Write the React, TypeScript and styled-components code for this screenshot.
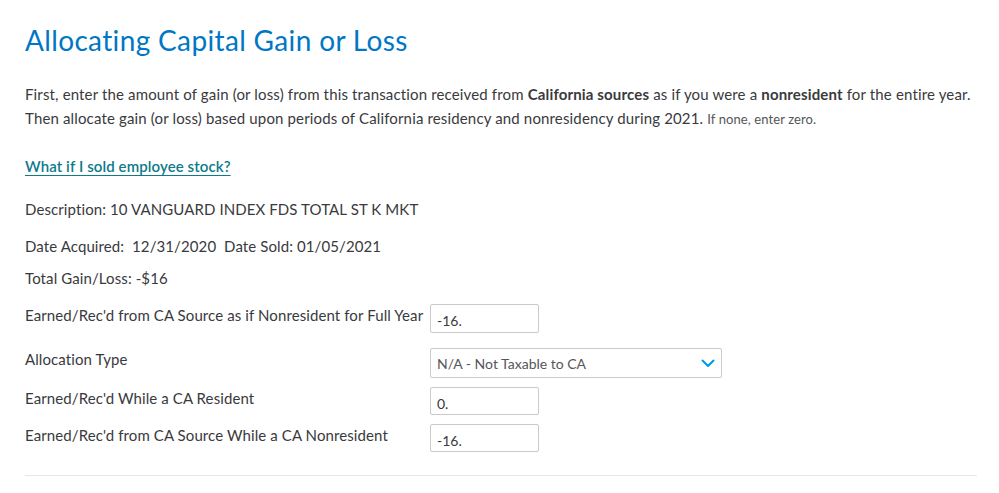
import styled, {createGlobalStyle} from "styled-components"

const GlobalStyle = createGlobalStyle`
  body {
    margin: 0;
    background: #ffffff;
    font-family: Lato, "Noto Sans", "Liberation Sans", sans-serif;
    color: #393a3d;
  }
`

const Page = styled.div`
  padding: 23px 22px 16px 25px;
  width: 952px;
`

const Title = styled.h1`
  margin: 0;
  font-size: 28px;
  line-height: 34px;
  font-weight: 400;
  letter-spacing: 0.35px;
  color: #0077c5;
`

const Intro = styled.p`
  margin: 25px 0 0;
  font-size: 15px;
  line-height: 24px;
  letter-spacing: 0.15px;
`

const Hint = styled.span`
  font-size: 13px;
  letter-spacing: 0.1px;
  color: #55565a;
`

const HelpLink = styled.a`
  display: inline-block;
  margin-top: 23px;
  font-size: 15px;
  line-height: 24px;
  font-weight: 600;
  letter-spacing: 0.1px;
  color: #0d7b8a;
  text-decoration: underline;
  text-underline-offset: 3px;
`

const Detail = styled.div<{gap: number}>`
  margin-top: ${({gap}) => gap}px;
  font-size: 15px;
  line-height: 24px;
  letter-spacing: 0.1px;
  white-space: pre;
`

const Form = styled.div`
  margin-top: 14px;
  display: flex;
  flex-direction: column;
`

const Row = styled.div<{gap: number}>`
  display: grid;
  grid-template-columns: 405px 1fr;
  align-items: start;
  margin-top: ${({gap}) => gap}px;
`

const Label = styled.div`
  font-size: 15px;
  line-height: 22px;
  letter-spacing: 0.1px;
`

const Field = styled.input<{tall: number}>`
  box-sizing: border-box;
  width: 109px;
  height: ${({tall}) => tall}px;
  margin: 0;
  padding: 4px 6px 0;
  border: 1px solid #c9cacc;
  border-radius: 2px;
  font-family: inherit;
  font-size: 14px;
  color: #393a3d;
  background: #ffffff;
  outline: none;
`

const SelectBox = styled.div`
  box-sizing: border-box;
  width: 292px;
  height: 30px;
  padding: 0 6px 0 6px;
  border: 1px solid #c9cacc;
  border-radius: 2px;
  display: flex;
  align-items: center;
  justify-content: space-between;
  font-size: 14px;
  color: #55565a;
`

const Divider = styled.hr`
  margin: 23px 0 0;
  border: none;
  border-top: 1px solid #e6e7e8;
`

function Chevron() {
  return (
    <svg width="14" height="9" viewBox="0 0 14 9" fill="none">
      <path d="M1.5 1.5 L7 7 L12.5 1.5" stroke="#0097e6" strokeWidth="2" strokeLinecap="round" strokeLinejoin="round" />
    </svg>
  )
}

export default function App() {
  return (
    <Page>
      <GlobalStyle />
      <Title>Allocating Capital Gain or Loss</Title>
      <Intro>
        First, enter the amount of gain (or loss) from this transaction received from <b>California sources</b> as if
        you were a <b>nonresident</b> for the entire year. Then allocate gain (or loss) based upon periods of California
        residency and nonresidency during 2021. <Hint>If none, enter zero.</Hint>
      </Intro>
      <HelpLink href="#">What if I sold employee stock?</HelpLink>
      <Detail gap={19}>Description: 10 VANGUARD INDEX FDS TOTAL ST K MKT</Detail>
      <Detail gap={13}>{"Date Acquired:  12/31/2020  Date Sold: 01/05/2021"}</Detail>
      <Detail gap={8}>Total Gain/Loss: -$16</Detail>
      <Form>
        <Row gap={0}>
          <Label>Earned/Rec'd from CA Source as if Nonresident for Full Year</Label>
          <Field tall={29} defaultValue="-16." />
        </Row>
        <Row gap={15}>
          <Label>Allocation Type</Label>
          <SelectBox>
            <span>N/A - Not Taxable to CA</span>
            <Chevron />
          </SelectBox>
        </Row>
        <Row gap={9}>
          <Label>Earned/Rec'd While a CA Resident</Label>
          <Field tall={28} defaultValue="0." />
        </Row>
        <Row gap={9}>
          <Label>Earned/Rec'd from CA Source While a CA Nonresident</Label>
          <Field tall={28} defaultValue="-16." />
        </Row>
      </Form>
      <Divider />
    </Page>
  )
}
